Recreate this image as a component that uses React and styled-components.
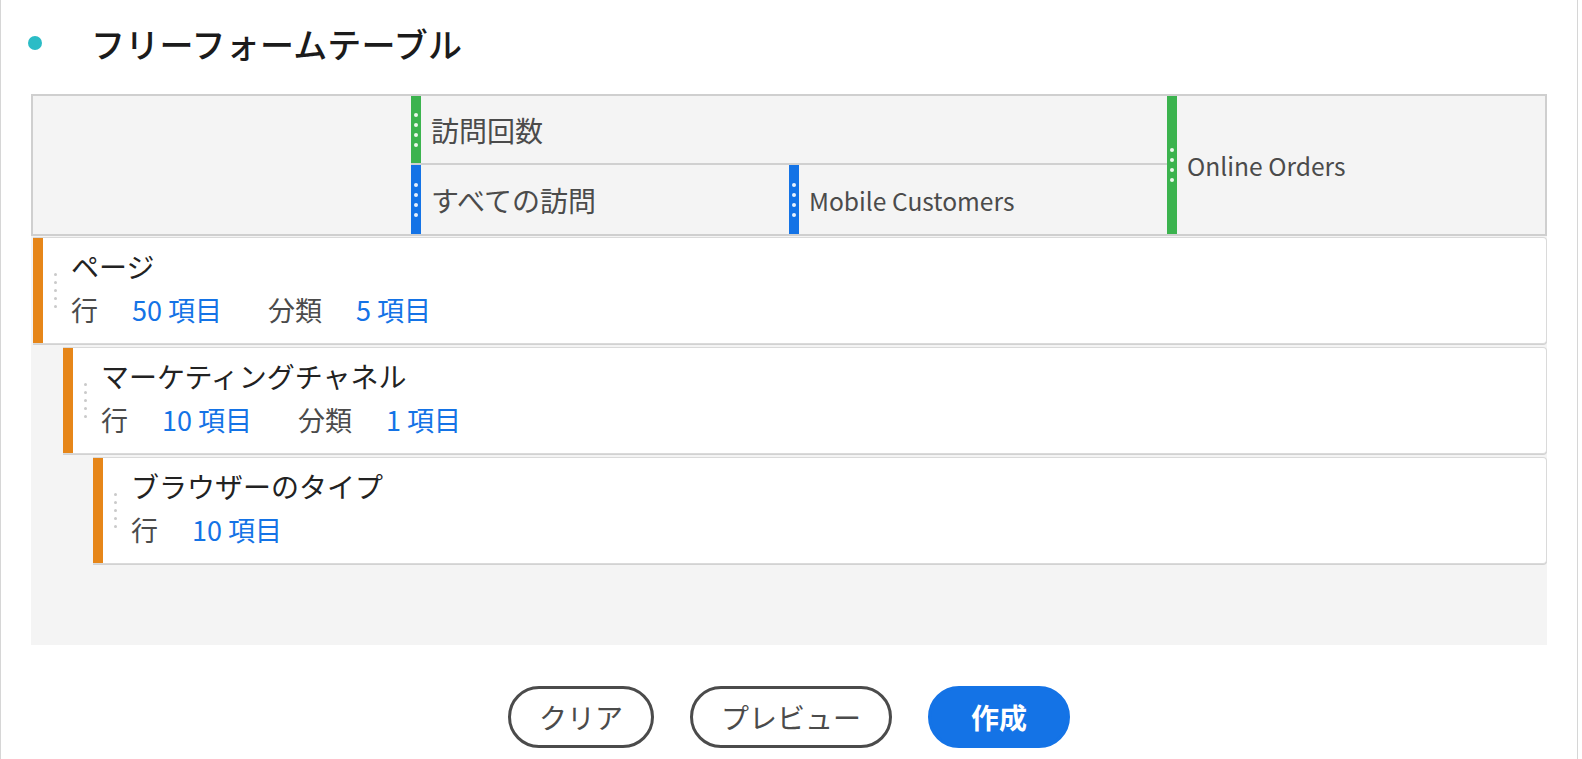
import React from "react";
import styled, { createGlobalStyle } from "styled-components";

const GlobalStyle = createGlobalStyle`
  html, body {
    margin: 0;
    padding: 0;
    background: #fff;
  }
  body {
    font-family: "Noto Sans CJK JP", "Noto Sans", sans-serif;
    color: #2c2c2c;
  }
  * {
    box-sizing: border-box;
  }
`;

const Panel = styled.div`
  width: 1578px;
  height: 759px;
  border-left: 1px solid #d6d6d6;
  border-right: 1px solid #d6d6d6;
  display: flex;
  flex-direction: column;
  overflow: hidden;
`;

const TitleBar = styled.div`
  height: 86px;
  margin-bottom: 8px;
  padding-left: 27px;
  display: flex;
  align-items: center;
  gap: 49px;
`;

const TitleDot = styled.span`
  width: 14px;
  height: 14px;
  border-radius: 50%;
  background: #2bbcc6;
`;

const Title = styled.h1`
  margin: 0;
  font-size: 34px;
  font-weight: 500;
  color: #1b1b1b;
  letter-spacing: 0.2px;
`;

const TableWrap = styled.div`
  margin: 0 30px;
`;

const Header = styled.div`
  display: grid;
  grid-template-columns: repeat(4, 1fr);
  grid-template-rows: 69px 69px;
  background: #f4f4f4;
  border: 2px solid #cfcfcf;
`;

const HeaderCell = styled.div`
  grid-column: ${(p) => p.$col};
  grid-row: ${(p) => p.$row};
  display: flex;
  align-items: stretch;
  border-bottom: ${(p) => (p.$divider ? "2px solid #d0d0d0" : "none")};
`;

const ColumnBar = styled.div`
  width: 10px;
  flex-shrink: 0;
  background: ${(p) => p.$color};
  display: flex;
  flex-direction: column;
  align-items: center;
  justify-content: center;
  gap: 6px;
`;

const BarDot = styled.span`
  width: 4px;
  height: 4px;
  border-radius: 50%;
  background: rgba(255, 255, 255, 0.9);
`;

const HeaderLabel = styled.div`
  display: flex;
  align-items: center;
  padding-left: 10px;
  font-size: ${(p) => (p.$latin ? "24.6px" : "28px")};
  color: #4b4b4b;
`;

const Body = styled.div`
  background: #f4f4f4;
  padding: 1px 0 81px 2px;
  display: flex;
  flex-direction: column;
  gap: 3px;
`;

const Card = styled.div`
  margin-left: ${(p) => p.$depth * 30}px;
  height: 107px;
  display: flex;
  background: #fff;
  border: 1px solid #dadada;
  border-left: none;
  border-radius: 0 4px 4px 0;
  box-shadow: 0 1px 0 #d2d2d2;
`;

const OrangeBar = styled.div`
  width: 10px;
  flex-shrink: 0;
  background: #e68619;
`;

const Handle = styled.div`
  width: 24px;
  flex-shrink: 0;
  display: flex;
  flex-direction: column;
  align-items: center;
  justify-content: center;
  gap: 5px;
`;

const HandleDot = styled.span`
  width: 3px;
  height: 3px;
  border-radius: 50%;
  background: #cacaca;
`;

const CardContent = styled.div`
  padding: 6px 0 0 4px;
  font-size: 28px;
`;

const CardTitle = styled.div`
  height: 44px;
  line-height: 44px;
  color: #222;
`;

const Stats = styled.div`
  height: 44px;
  line-height: 44px;
  display: flex;
  font-size: 27px;
`;

const StatLabel = styled.span`
  color: #4b4b4b;
  margin-right: 34px;
`;

const StatValue = styled.span`
  color: #1473e6;
  margin-right: 46px;
`;

const ButtonBar = styled.div`
  margin-top: 41px;
  display: flex;
  justify-content: center;
  gap: 36px;
`;

const Button = styled.button`
  height: 62px;
  min-width: 142px;
  padding: 0 28px;
  border-radius: 31px;
  font-family: inherit;
  font-size: 28px;
  border: 3px solid ${(p) => (p.$primary ? "#1473e6" : "#4b4b4b")};
  background: ${(p) => (p.$primary ? "#1473e6" : "#fff")};
  color: ${(p) => (p.$primary ? "#fff" : "#4b4b4b")};
  font-weight: ${(p) => (p.$primary ? 700 : 400)};
  cursor: pointer;
`;

const Dots = ({ count, Dot }) => (
  <>
    {Array.from({ length: count }).map((_, i) => (
      <Dot key={i} />
    ))}
  </>
);

const columns = [
  { label: "訪問回数", col: "2 / span 2", row: "1", color: "#3bb34e", divider: true },
  { label: "すべての訪問", col: "2", row: "2", color: "#1473e6" },
  { label: "Mobile Customers", col: "3", row: "2", color: "#1473e6", latin: true },
  { label: "Online Orders", col: "4", row: "1 / span 2", color: "#3bb34e", latin: true },
];

const rows = [
  {
    name: "ページ",
    stats: [
      ["行", "50 項目"],
      ["分類", "5 項目"],
    ],
  },
  {
    name: "マーケティングチャネル",
    stats: [
      ["行", "10 項目"],
      ["分類", "1 項目"],
    ],
  },
  {
    name: "ブラウザーのタイプ",
    stats: [["行", "10 項目"]],
  },
];

export default function App() {
  return (
    <>
      <GlobalStyle />
      <Panel>
        <TitleBar>
          <TitleDot />
          <Title>フリーフォームテーブル</Title>
        </TitleBar>
        <TableWrap>
          <Header>
            <HeaderCell $col="1" $row="1 / span 2" />
            {columns.map((c) => (
              <HeaderCell key={c.label} $col={c.col} $row={c.row} $divider={c.divider}>
                <ColumnBar $color={c.color}>
                  <Dots count={4} Dot={BarDot} />
                </ColumnBar>
                <HeaderLabel $latin={c.latin}>{c.label}</HeaderLabel>
              </HeaderCell>
            ))}
          </Header>
          <Body>
            {rows.map((r, depth) => (
              <Card key={r.name} $depth={depth}>
                <OrangeBar />
                <Handle>
                  <Dots count={5} Dot={HandleDot} />
                </Handle>
                <CardContent>
                  <CardTitle>{r.name}</CardTitle>
                  <Stats>
                    {r.stats.map(([label, value]) => (
                      <React.Fragment key={label}>
                        <StatLabel>{label}</StatLabel>
                        <StatValue>{value}</StatValue>
                      </React.Fragment>
                    ))}
                  </Stats>
                </CardContent>
              </Card>
            ))}
          </Body>
        </TableWrap>
        <ButtonBar>
          <Button>クリア</Button>
          <Button>プレビュー</Button>
          <Button $primary>作成</Button>
        </ButtonBar>
      </Panel>
    </>
  );
}
